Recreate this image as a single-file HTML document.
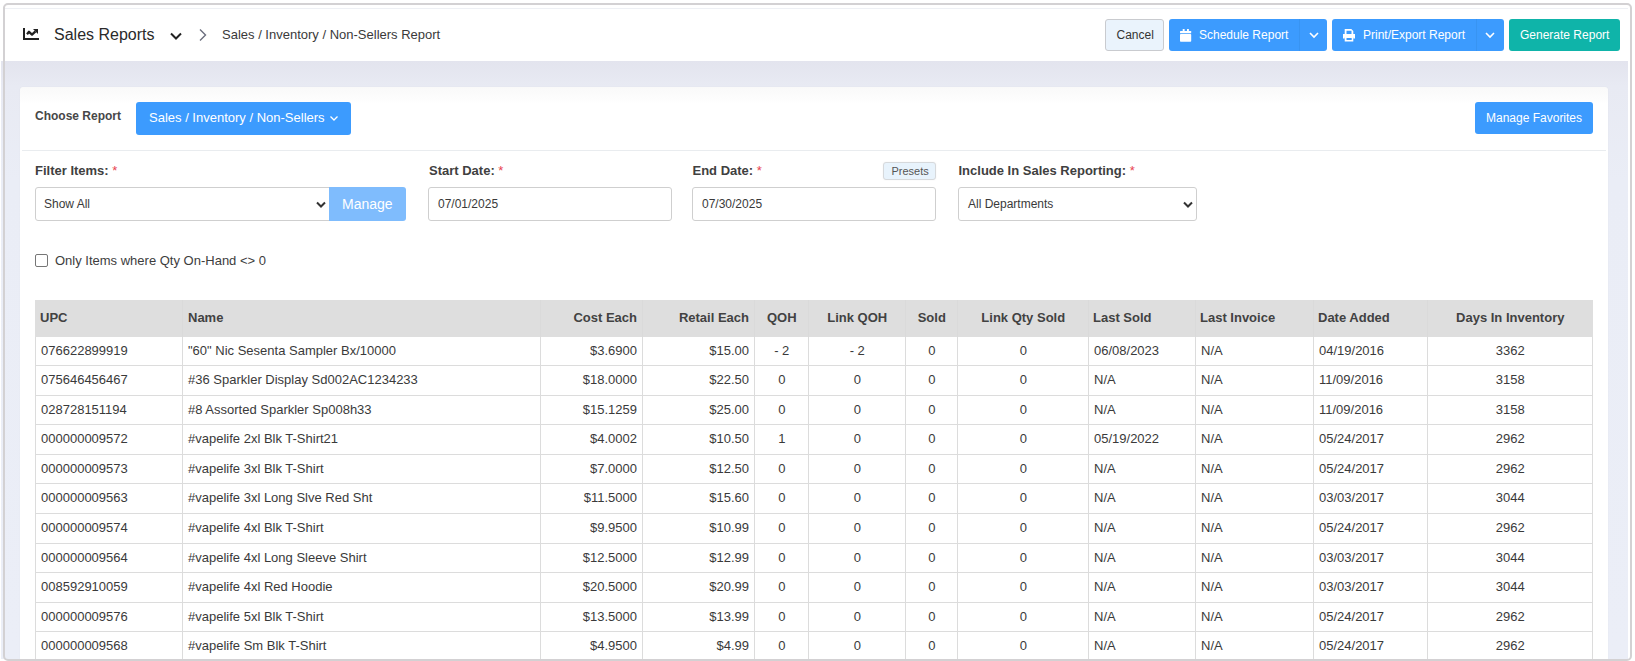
<!DOCTYPE html>
<html><head><meta charset="utf-8">
<style>
*{box-sizing:border-box}
html,body{margin:0;padding:0}
body{width:1635px;height:661px;overflow:hidden;background:#fff;position:relative;font-family:"Liberation Sans",sans-serif;color:#333}
.a{position:absolute}
.frame{position:absolute;left:3px;top:3px;width:1629px;height:658px;border:2px solid #d3d1d3;border-radius:5px;z-index:50;pointer-events:none}
.topline{position:absolute;left:5px;top:8px;width:1623px;height:1px;background:#eef0f4}
.bg{position:absolute;left:1px;top:61px;width:1627px;height:598px;background:linear-gradient(#e3e4ee,#e8eaf3 25px,#eaedf6 120px,#ebeef7)}
.card{position:absolute;left:20px;top:86.5px;width:1588px;height:600px;background:linear-gradient(#f9f9f9,#fdfdfd 12px,#fff 16px);border-radius:3px;box-shadow:0 0 1px rgba(0,0,0,.10)}
.txt{position:absolute;white-space:pre;line-height:1}
.btn{position:absolute;border-radius:3px;color:#fff;font-size:12px}
.blue{background:#3c9bfe}
.sep{position:absolute;left:22px;top:150px;width:1584px;height:1px;background:#e9ecef}
.lbl{position:absolute;font-size:13px;font-weight:bold;color:#404040;line-height:1;white-space:pre}
.req{color:#e8434f;font-weight:normal}
.inp{position:absolute;border:1px solid #cfcfcf;border-radius:3px;background:#fff;font-size:12px;color:#3a3a3a}
.th-bg{position:absolute;background:#dedede}
.th{position:absolute;font-size:13px;font-weight:bold;color:#424242;line-height:1;padding-top:11px;white-space:pre}
.td{position:absolute;font-size:13px;color:#3a3a3a;line-height:1;padding-top:7.5px;white-space:pre}
.l{text-align:left;padding-left:5px}
.td.l{padding-left:6px}
.th.n{padding-left:6px}
.r{text-align:right;padding-right:5px}
.c{text-align:center;padding-left:1.5px}
.vl{position:absolute;width:1px;background:#dcdcdc}
.vlh{position:absolute;width:1px;background:#dadada}
.hl{position:absolute;height:1px;background:#dcdcdc}
</style></head><body>
<div class="frame"></div>
<div class="topline"></div>
<div class="bg"></div>

<!-- header -->
<svg class="a" style="left:20px;top:25px" width="22" height="18" viewBox="0 0 22 18">
<rect x="3" y="3" width="2" height="12" fill="#222"/>
<rect x="3" y="13" width="16" height="2" fill="#222"/>
<polyline points="7,9.2 9,6.8 12,9.6 15.5,6.3" fill="none" stroke="#222" stroke-width="2.3" stroke-linejoin="round"/>
<polygon points="13,3.9 18,3.9 18,8.9" fill="#222"/>
</svg>
<div class="txt" style="left:54px;top:27px;font-size:16px;color:#2a2a2a">Sales Reports</div>
<svg class="a" style="left:168px;top:30px" width="16" height="12" viewBox="0 0 16 12">
<polyline points="3,3.5 8,8.5 13,3.5" fill="none" stroke="#222" stroke-width="2"/>
</svg>
<svg class="a" style="left:196px;top:27px" width="14" height="16" viewBox="0 0 14 16">
<polyline points="4,2.5 9.5,8 4,13.5" fill="none" stroke="#6b6e7e" stroke-width="1.4"/>
</svg>
<div class="txt" style="left:222px;top:27.5px;font-size:13px;color:#3a3a3a">Sales / Inventory / Non-Sellers Report</div>

<div class="btn" style="left:1105px;top:19px;width:59px;height:32px;background:#eaf3fc;border:1px solid #c9cbcf;color:#333"><span class="txt" style="left:10.5px;top:9px">Cancel</span></div>
<div class="btn blue" style="left:1169px;top:19px;width:158px;height:32px">
 <svg class="a" style="left:10px;top:10px" width="13" height="14" viewBox="0 0 13 14">
  <rect x="1" y="2" width="11.2" height="2.3" rx="0.6" fill="#fff"/>
  <rect x="1" y="5" width="11.2" height="7.8" rx="0.8" fill="#fff"/>
  <rect x="3.7" y="0" width="1.9" height="3" fill="#fff"/>
  <rect x="8" y="0" width="1.9" height="3" fill="#fff"/>
 </svg>
 <span class="txt" style="left:30px;top:10px">Schedule Report</span>
 <div class="a" style="left:129.5px;top:0;width:1px;height:32px;background:#3894f2"></div>
 <svg class="a" style="left:139px;top:12px" width="12" height="8" viewBox="0 0 12 8"><polyline points="2,2 6,6 10,2" fill="none" stroke="#fff" stroke-width="1.6"/></svg>
</div>
<div class="btn blue" style="left:1332px;top:19px;width:172px;height:32px">
 <svg class="a" style="left:10px;top:9px" width="14" height="14" viewBox="0 0 14 14">
  <path fill="#fff" fill-rule="evenodd" d="M2.7 1h6.6l2 2v3.2h-1.8V2.8H4.5v3.4H2.7z"/>
  <path fill="#fff" fill-rule="evenodd" d="M1 6h12v4.5h-1.7v-1H2.7v1H1z"/>
  <path fill="#fff" fill-rule="evenodd" d="M2.7 8.7h8.6v4.9H2.7z M4.5 10v2h5.2v-2z"/>
 </svg>
 <span class="txt" style="left:31px;top:10px">Print/Export Report</span>
 <div class="a" style="left:144px;top:0;width:1px;height:32px;background:#3894f2"></div>
 <svg class="a" style="left:152px;top:12px" width="12" height="8" viewBox="0 0 12 8"><polyline points="2,2 6,6 10,2" fill="none" stroke="#fff" stroke-width="1.6"/></svg>
</div>
<div class="btn" style="left:1509px;top:19px;width:111px;height:32px;background:#0fb4a9"><span class="txt" style="left:11px;top:10px">Generate Report</span></div>

<!-- card -->
<div class="card"></div>
<div class="lbl" style="left:35px;top:109.5px;font-size:12px;color:#474747">Choose Report</div>
<div class="btn blue" style="left:136px;top:102px;width:215px;height:33px;font-size:13px">
 <span class="txt" style="left:13px;top:9px">Sales / Inventory / Non-Sellers</span>
 <svg class="a" style="left:192px;top:12px" width="12" height="8" viewBox="0 0 12 8"><polyline points="2.5,2.5 6,6 9.5,2.5" fill="none" stroke="#fff" stroke-width="1.3"/></svg>
</div>
<div class="btn blue" style="left:1475px;top:102px;width:118px;height:32px"><span class="txt" style="left:11px;top:9.5px">Manage Favorites</span></div>
<div class="sep"></div>

<div class="lbl" style="left:35px;top:163.5px">Filter Items: <span class="req">*</span></div>
<div class="lbl" style="left:429px;top:163.5px">Start Date: <span class="req">*</span></div>
<div class="lbl" style="left:692.5px;top:163.5px">End Date: <span class="req">*</span></div>
<div class="lbl" style="left:958.5px;top:163.5px">Include In Sales Reporting: <span class="req">*</span></div>

<div class="inp" style="left:35px;top:187px;width:296px;height:34px;border-radius:3px 0 0 3px">
 <span class="txt" style="left:8px;top:9.5px">Show All</span>
 <svg class="a" style="left:278px;top:12px" width="14" height="10" viewBox="0 0 14 10"><polyline points="3,2.5 7,6.5 11,2.5" fill="none" stroke="#333" stroke-width="2"/></svg>
</div>
<div class="btn" style="left:329px;top:187px;width:77px;height:34px;background:#7fbcfd;border-radius:0 3px 3px 0;font-size:14px"><span class="txt" style="left:13px;top:10px">Manage</span></div>

<div class="inp" style="left:428px;top:187px;width:244px;height:34px"><span class="txt" style="left:9px;top:9.5px">07/01/2025</span></div>
<div class="inp" style="left:692px;top:187px;width:244px;height:34px"><span class="txt" style="left:9px;top:9.5px">07/30/2025</span></div>
<div class="a" style="left:883px;top:162px;width:53px;height:18px;background:#e8f3fc;border:1px solid #d6d9dc;border-radius:3px;font-size:11px;color:#555;box-shadow:0 0 2px rgba(0,0,0,.06)"><span class="txt" style="left:7.5px;top:3px">Presets</span></div>
<div class="inp" style="left:958px;top:187px;width:239px;height:34px">
 <span class="txt" style="left:9px;top:9.5px">All Departments</span>
 <svg class="a" style="left:222px;top:12px" width="14" height="10" viewBox="0 0 14 10"><polyline points="3,2.5 7,6.5 11,2.5" fill="none" stroke="#333" stroke-width="2"/></svg>
</div>

<div class="a" style="left:35px;top:254px;width:13px;height:13px;border:1px solid #767676;border-radius:2px;background:#fff"></div>
<div class="txt" style="left:55px;top:253.5px;font-size:13px;color:#3d3d3d">Only Items where Qty On-Hand &lt;&gt; 0</div>

<div class="th-bg" style="left:35px;top:300px;width:1558px;height:36.6px"></div>
<div class="th l" style="left:35px;top:300px;width:147px;height:36.6px">UPC</div>
<div class="th l n" style="left:182px;top:300px;width:358px;height:36.6px">Name</div>
<div class="th r" style="left:540px;top:300px;width:102px;height:36.6px">Cost Each</div>
<div class="th r" style="left:642px;top:300px;width:112px;height:36.6px">Retail Each</div>
<div class="th c" style="left:754px;top:300px;width:54px;height:36.6px">QOH</div>
<div class="th c" style="left:808px;top:300px;width:97px;height:36.6px">Link QOH</div>
<div class="th c" style="left:905px;top:300px;width:52px;height:36.6px">Sold</div>
<div class="th c" style="left:957px;top:300px;width:131px;height:36.6px">Link Qty Sold</div>
<div class="th l" style="left:1088px;top:300px;width:107px;height:36.6px">Last Sold</div>
<div class="th l" style="left:1195px;top:300px;width:118px;height:36.6px">Last Invoice</div>
<div class="th l" style="left:1313px;top:300px;width:114px;height:36.6px">Date Added</div>
<div class="th c" style="left:1427px;top:300px;width:165px;height:36.6px">Days In Inventory</div>
<div class="vl" style="left:35px;top:336.6px;height:324.4px"></div>
<div class="vl" style="left:182px;top:336.6px;height:324.4px"></div>
<div class="vl" style="left:540px;top:336.6px;height:324.4px"></div>
<div class="vl" style="left:642px;top:336.6px;height:324.4px"></div>
<div class="vl" style="left:754px;top:336.6px;height:324.4px"></div>
<div class="vl" style="left:808px;top:336.6px;height:324.4px"></div>
<div class="vl" style="left:905px;top:336.6px;height:324.4px"></div>
<div class="vl" style="left:957px;top:336.6px;height:324.4px"></div>
<div class="vl" style="left:1088px;top:336.6px;height:324.4px"></div>
<div class="vl" style="left:1195px;top:336.6px;height:324.4px"></div>
<div class="vl" style="left:1313px;top:336.6px;height:324.4px"></div>
<div class="vl" style="left:1427px;top:336.6px;height:324.4px"></div>
<div class="vl" style="left:1592px;top:336.6px;height:324.4px"></div>
<div class="vlh" style="left:182px;top:300px;height:36.6px"></div>
<div class="vlh" style="left:540px;top:300px;height:36.6px"></div>
<div class="vlh" style="left:642px;top:300px;height:36.6px"></div>
<div class="vlh" style="left:754px;top:300px;height:36.6px"></div>
<div class="vlh" style="left:808px;top:300px;height:36.6px"></div>
<div class="vlh" style="left:905px;top:300px;height:36.6px"></div>
<div class="vlh" style="left:957px;top:300px;height:36.6px"></div>
<div class="vlh" style="left:1088px;top:300px;height:36.6px"></div>
<div class="vlh" style="left:1195px;top:300px;height:36.6px"></div>
<div class="vlh" style="left:1313px;top:300px;height:36.6px"></div>
<div class="vlh" style="left:1427px;top:300px;height:36.6px"></div>
<div class="hl" style="left:35px;top:365px;width:1557px"></div>
<div class="hl" style="left:35px;top:395px;width:1557px"></div>
<div class="hl" style="left:35px;top:424px;width:1557px"></div>
<div class="hl" style="left:35px;top:454px;width:1557px"></div>
<div class="hl" style="left:35px;top:483px;width:1557px"></div>
<div class="hl" style="left:35px;top:513px;width:1557px"></div>
<div class="hl" style="left:35px;top:543px;width:1557px"></div>
<div class="hl" style="left:35px;top:572px;width:1557px"></div>
<div class="hl" style="left:35px;top:602px;width:1557px"></div>
<div class="hl" style="left:35px;top:631px;width:1557px"></div>
<div class="td l" style="left:35px;top:336px;width:147px;height:29.5px">076622899919</div>
<div class="td l" style="left:182px;top:336px;width:358px;height:29.5px">"60" Nic Sesenta Sampler Bx/10000</div>
<div class="td r" style="left:540px;top:336px;width:102px;height:29.5px">$3.6900</div>
<div class="td r" style="left:642px;top:336px;width:112px;height:29.5px">$15.00</div>
<div class="td c" style="left:754px;top:336px;width:54px;height:29.5px">- 2</div>
<div class="td c" style="left:808px;top:336px;width:97px;height:29.5px">- 2</div>
<div class="td c" style="left:905px;top:336px;width:52px;height:29.5px">0</div>
<div class="td c" style="left:957px;top:336px;width:131px;height:29.5px">0</div>
<div class="td l" style="left:1088px;top:336px;width:107px;height:29.5px">06/08/2023</div>
<div class="td l" style="left:1195px;top:336px;width:118px;height:29.5px">N/A</div>
<div class="td l" style="left:1313px;top:336px;width:114px;height:29.5px">04/19/2016</div>
<div class="td c" style="left:1427px;top:336px;width:165px;height:29.5px">3362</div>
<div class="td l" style="left:35px;top:365px;width:147px;height:29.5px">075646456467</div>
<div class="td l" style="left:182px;top:365px;width:358px;height:29.5px">#36 Sparkler Display Sd002AC1234233</div>
<div class="td r" style="left:540px;top:365px;width:102px;height:29.5px">$18.0000</div>
<div class="td r" style="left:642px;top:365px;width:112px;height:29.5px">$22.50</div>
<div class="td c" style="left:754px;top:365px;width:54px;height:29.5px">0</div>
<div class="td c" style="left:808px;top:365px;width:97px;height:29.5px">0</div>
<div class="td c" style="left:905px;top:365px;width:52px;height:29.5px">0</div>
<div class="td c" style="left:957px;top:365px;width:131px;height:29.5px">0</div>
<div class="td l" style="left:1088px;top:365px;width:107px;height:29.5px">N/A</div>
<div class="td l" style="left:1195px;top:365px;width:118px;height:29.5px">N/A</div>
<div class="td l" style="left:1313px;top:365px;width:114px;height:29.5px">11/09/2016</div>
<div class="td c" style="left:1427px;top:365px;width:165px;height:29.5px">3158</div>
<div class="td l" style="left:35px;top:395px;width:147px;height:29.5px">028728151194</div>
<div class="td l" style="left:182px;top:395px;width:358px;height:29.5px">#8 Assorted Sparkler Sp008h33</div>
<div class="td r" style="left:540px;top:395px;width:102px;height:29.5px">$15.1259</div>
<div class="td r" style="left:642px;top:395px;width:112px;height:29.5px">$25.00</div>
<div class="td c" style="left:754px;top:395px;width:54px;height:29.5px">0</div>
<div class="td c" style="left:808px;top:395px;width:97px;height:29.5px">0</div>
<div class="td c" style="left:905px;top:395px;width:52px;height:29.5px">0</div>
<div class="td c" style="left:957px;top:395px;width:131px;height:29.5px">0</div>
<div class="td l" style="left:1088px;top:395px;width:107px;height:29.5px">N/A</div>
<div class="td l" style="left:1195px;top:395px;width:118px;height:29.5px">N/A</div>
<div class="td l" style="left:1313px;top:395px;width:114px;height:29.5px">11/09/2016</div>
<div class="td c" style="left:1427px;top:395px;width:165px;height:29.5px">3158</div>
<div class="td l" style="left:35px;top:424px;width:147px;height:29.5px">000000009572</div>
<div class="td l" style="left:182px;top:424px;width:358px;height:29.5px">#vapelife 2xl Blk T-Shirt21</div>
<div class="td r" style="left:540px;top:424px;width:102px;height:29.5px">$4.0002</div>
<div class="td r" style="left:642px;top:424px;width:112px;height:29.5px">$10.50</div>
<div class="td c" style="left:754px;top:424px;width:54px;height:29.5px">1</div>
<div class="td c" style="left:808px;top:424px;width:97px;height:29.5px">0</div>
<div class="td c" style="left:905px;top:424px;width:52px;height:29.5px">0</div>
<div class="td c" style="left:957px;top:424px;width:131px;height:29.5px">0</div>
<div class="td l" style="left:1088px;top:424px;width:107px;height:29.5px">05/19/2022</div>
<div class="td l" style="left:1195px;top:424px;width:118px;height:29.5px">N/A</div>
<div class="td l" style="left:1313px;top:424px;width:114px;height:29.5px">05/24/2017</div>
<div class="td c" style="left:1427px;top:424px;width:165px;height:29.5px">2962</div>
<div class="td l" style="left:35px;top:454px;width:147px;height:29.5px">000000009573</div>
<div class="td l" style="left:182px;top:454px;width:358px;height:29.5px">#vapelife 3xl Blk T-Shirt</div>
<div class="td r" style="left:540px;top:454px;width:102px;height:29.5px">$7.0000</div>
<div class="td r" style="left:642px;top:454px;width:112px;height:29.5px">$12.50</div>
<div class="td c" style="left:754px;top:454px;width:54px;height:29.5px">0</div>
<div class="td c" style="left:808px;top:454px;width:97px;height:29.5px">0</div>
<div class="td c" style="left:905px;top:454px;width:52px;height:29.5px">0</div>
<div class="td c" style="left:957px;top:454px;width:131px;height:29.5px">0</div>
<div class="td l" style="left:1088px;top:454px;width:107px;height:29.5px">N/A</div>
<div class="td l" style="left:1195px;top:454px;width:118px;height:29.5px">N/A</div>
<div class="td l" style="left:1313px;top:454px;width:114px;height:29.5px">05/24/2017</div>
<div class="td c" style="left:1427px;top:454px;width:165px;height:29.5px">2962</div>
<div class="td l" style="left:35px;top:483px;width:147px;height:29.5px">000000009563</div>
<div class="td l" style="left:182px;top:483px;width:358px;height:29.5px">#vapelife 3xl Long Slve Red Sht</div>
<div class="td r" style="left:540px;top:483px;width:102px;height:29.5px">$11.5000</div>
<div class="td r" style="left:642px;top:483px;width:112px;height:29.5px">$15.60</div>
<div class="td c" style="left:754px;top:483px;width:54px;height:29.5px">0</div>
<div class="td c" style="left:808px;top:483px;width:97px;height:29.5px">0</div>
<div class="td c" style="left:905px;top:483px;width:52px;height:29.5px">0</div>
<div class="td c" style="left:957px;top:483px;width:131px;height:29.5px">0</div>
<div class="td l" style="left:1088px;top:483px;width:107px;height:29.5px">N/A</div>
<div class="td l" style="left:1195px;top:483px;width:118px;height:29.5px">N/A</div>
<div class="td l" style="left:1313px;top:483px;width:114px;height:29.5px">03/03/2017</div>
<div class="td c" style="left:1427px;top:483px;width:165px;height:29.5px">3044</div>
<div class="td l" style="left:35px;top:513px;width:147px;height:29.5px">000000009574</div>
<div class="td l" style="left:182px;top:513px;width:358px;height:29.5px">#vapelife 4xl Blk T-Shirt</div>
<div class="td r" style="left:540px;top:513px;width:102px;height:29.5px">$9.9500</div>
<div class="td r" style="left:642px;top:513px;width:112px;height:29.5px">$10.99</div>
<div class="td c" style="left:754px;top:513px;width:54px;height:29.5px">0</div>
<div class="td c" style="left:808px;top:513px;width:97px;height:29.5px">0</div>
<div class="td c" style="left:905px;top:513px;width:52px;height:29.5px">0</div>
<div class="td c" style="left:957px;top:513px;width:131px;height:29.5px">0</div>
<div class="td l" style="left:1088px;top:513px;width:107px;height:29.5px">N/A</div>
<div class="td l" style="left:1195px;top:513px;width:118px;height:29.5px">N/A</div>
<div class="td l" style="left:1313px;top:513px;width:114px;height:29.5px">05/24/2017</div>
<div class="td c" style="left:1427px;top:513px;width:165px;height:29.5px">2962</div>
<div class="td l" style="left:35px;top:543px;width:147px;height:29.5px">000000009564</div>
<div class="td l" style="left:182px;top:543px;width:358px;height:29.5px">#vapelife 4xl Long Sleeve Shirt</div>
<div class="td r" style="left:540px;top:543px;width:102px;height:29.5px">$12.5000</div>
<div class="td r" style="left:642px;top:543px;width:112px;height:29.5px">$12.99</div>
<div class="td c" style="left:754px;top:543px;width:54px;height:29.5px">0</div>
<div class="td c" style="left:808px;top:543px;width:97px;height:29.5px">0</div>
<div class="td c" style="left:905px;top:543px;width:52px;height:29.5px">0</div>
<div class="td c" style="left:957px;top:543px;width:131px;height:29.5px">0</div>
<div class="td l" style="left:1088px;top:543px;width:107px;height:29.5px">N/A</div>
<div class="td l" style="left:1195px;top:543px;width:118px;height:29.5px">N/A</div>
<div class="td l" style="left:1313px;top:543px;width:114px;height:29.5px">03/03/2017</div>
<div class="td c" style="left:1427px;top:543px;width:165px;height:29.5px">3044</div>
<div class="td l" style="left:35px;top:572px;width:147px;height:29.5px">008592910059</div>
<div class="td l" style="left:182px;top:572px;width:358px;height:29.5px">#vapelife 4xl Red Hoodie</div>
<div class="td r" style="left:540px;top:572px;width:102px;height:29.5px">$20.5000</div>
<div class="td r" style="left:642px;top:572px;width:112px;height:29.5px">$20.99</div>
<div class="td c" style="left:754px;top:572px;width:54px;height:29.5px">0</div>
<div class="td c" style="left:808px;top:572px;width:97px;height:29.5px">0</div>
<div class="td c" style="left:905px;top:572px;width:52px;height:29.5px">0</div>
<div class="td c" style="left:957px;top:572px;width:131px;height:29.5px">0</div>
<div class="td l" style="left:1088px;top:572px;width:107px;height:29.5px">N/A</div>
<div class="td l" style="left:1195px;top:572px;width:118px;height:29.5px">N/A</div>
<div class="td l" style="left:1313px;top:572px;width:114px;height:29.5px">03/03/2017</div>
<div class="td c" style="left:1427px;top:572px;width:165px;height:29.5px">3044</div>
<div class="td l" style="left:35px;top:602px;width:147px;height:29.5px">000000009576</div>
<div class="td l" style="left:182px;top:602px;width:358px;height:29.5px">#vapelife 5xl Blk T-Shirt</div>
<div class="td r" style="left:540px;top:602px;width:102px;height:29.5px">$13.5000</div>
<div class="td r" style="left:642px;top:602px;width:112px;height:29.5px">$13.99</div>
<div class="td c" style="left:754px;top:602px;width:54px;height:29.5px">0</div>
<div class="td c" style="left:808px;top:602px;width:97px;height:29.5px">0</div>
<div class="td c" style="left:905px;top:602px;width:52px;height:29.5px">0</div>
<div class="td c" style="left:957px;top:602px;width:131px;height:29.5px">0</div>
<div class="td l" style="left:1088px;top:602px;width:107px;height:29.5px">N/A</div>
<div class="td l" style="left:1195px;top:602px;width:118px;height:29.5px">N/A</div>
<div class="td l" style="left:1313px;top:602px;width:114px;height:29.5px">05/24/2017</div>
<div class="td c" style="left:1427px;top:602px;width:165px;height:29.5px">2962</div>
<div class="td l" style="left:35px;top:631px;width:147px;height:29.5px">000000009568</div>
<div class="td l" style="left:182px;top:631px;width:358px;height:29.5px">#vapelife Sm Blk T-Shirt</div>
<div class="td r" style="left:540px;top:631px;width:102px;height:29.5px">$4.9500</div>
<div class="td r" style="left:642px;top:631px;width:112px;height:29.5px">$4.99</div>
<div class="td c" style="left:754px;top:631px;width:54px;height:29.5px">0</div>
<div class="td c" style="left:808px;top:631px;width:97px;height:29.5px">0</div>
<div class="td c" style="left:905px;top:631px;width:52px;height:29.5px">0</div>
<div class="td c" style="left:957px;top:631px;width:131px;height:29.5px">0</div>
<div class="td l" style="left:1088px;top:631px;width:107px;height:29.5px">N/A</div>
<div class="td l" style="left:1195px;top:631px;width:118px;height:29.5px">N/A</div>
<div class="td l" style="left:1313px;top:631px;width:114px;height:29.5px">05/24/2017</div>
<div class="td c" style="left:1427px;top:631px;width:165px;height:29.5px">2962</div>
</body></html>
